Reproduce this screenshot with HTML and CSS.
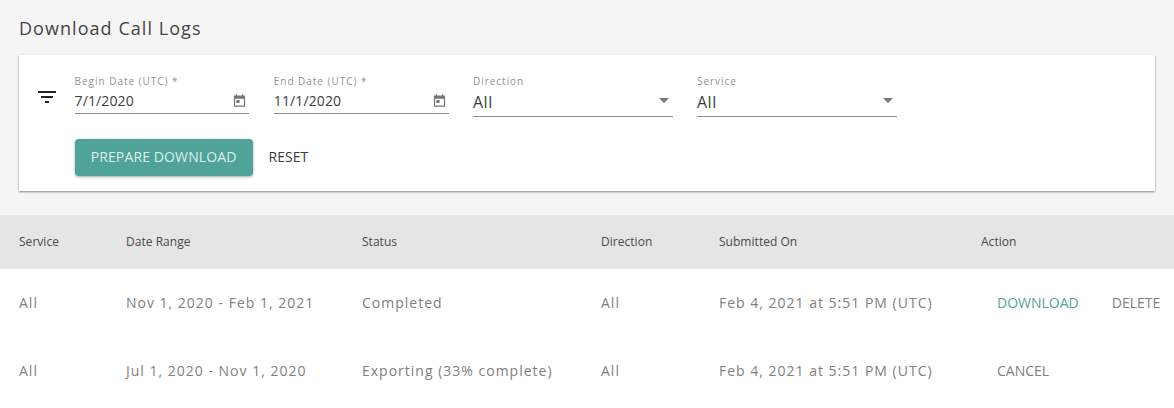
FILE: index.html
```html
<!DOCTYPE html>
<html lang="en">
<head>
<meta charset="utf-8">
<title>Download Call Logs</title>
<link rel="stylesheet" href="styles.css">
</head>
<body>
<main class="page">
  <h1 class="title">Download Call Logs</h1>
  <section class="card">
    <svg class="filter-icon" viewBox="0 0 24 24" width="24" height="24"><path d="M10 18h4v-2h-4v2zM3 6v2h18V6H3zm3 7h12v-2H6v2z"/></svg>
    <div class="form">
      <div class="fields">
        <div class="field date">
          <label class="label">Begin Date (UTC) *</label>
          <div class="control">
            <span class="value">7/1/2020</span>
            <svg class="cal" viewBox="0 0 24 24" width="15" height="15"><path d="M19 4h-1V2h-2v2H8V2H6v2H5c-1.1 0-2 .9-2 2v14c0 1.1.9 2 2 2h14c1.1 0 2-.9 2-2V6c0-1.100-.9-2-2-2zm0 16H5V9h14v11zM7 11h5v5H7z"/></svg>
          </div>
        </div>
        <div class="field date">
          <label class="label">End Date (UTC) *</label>
          <div class="control">
            <span class="value">11/1/2020</span>
            <svg class="cal" viewBox="0 0 24 24" width="15" height="15"><path d="M19 4h-1V2h-2v2H8V2H6v2H5c-1.1 0-2 .9-2 2v14c0 1.1.9 2 2 2h14c1.1 0 2-.9 2-2V6c0-1.100-.9-2-2-2zm0 16H5V9h14v11zM7 11h5v5H7z"/></svg>
          </div>
        </div>
        <div class="field select">
          <label class="label">Direction</label>
          <div class="control">
            <span class="value">All</span>
            <svg class="caret" viewBox="0 0 10 5" width="10" height="5"><path d="M0 0h10L5 5z"/></svg>
          </div>
        </div>
        <div class="field select">
          <label class="label">Service</label>
          <div class="control">
            <span class="value">All</span>
            <svg class="caret" viewBox="0 0 10 5" width="10" height="5"><path d="M0 0h10L5 5z"/></svg>
          </div>
        </div>
      </div>
      <div class="buttons">
        <button class="btn-primary">PREPARE DOWNLOAD</button>
        <button class="btn-text">RESET</button>
      </div>
    </div>
  </section>
  <section class="logs">
    <div class="row head">
      <div>Service</div><div>Date Range</div><div>Status</div><div>Direction</div><div>Submitted On</div><div>Action</div>
    </div>
    <div class="row item">
      <div>All</div><div>Nov 1, 2020 - Feb 1, 2021</div><div>Completed</div><div>All</div><div>Feb 4, 2021 at 5:51 PM (UTC)</div>
      <div class="actions"><a class="act green">DOWNLOAD</a><a class="act">DELETE</a></div>
    </div>
    <div class="row item">
      <div>All</div><div>Jul 1, 2020 - Nov 1, 2020</div><div>Exporting (33% complete)</div><div>All</div><div>Feb 4, 2021 at 5:51 PM (UTC)</div>
      <div class="actions"><a class="act">CANCEL</a></div>
    </div>
  </section>
</main>
</body>
</html>
```
FILE: styles.css
```css
* { box-sizing: border-box; }
html, body { margin: 0; height: 100%; }
body {
  background: #f5f5f5;
  font-family: "Open Sans", sans-serif;
  color: #333;
  overflow: hidden;
}
.page { display: flex; flex-direction: column; height: 408px; }
.title {
  margin: 0;
  padding: 16px 19px 0;
  height: 55px;
  font-size: 18px;
  line-height: 24px;
  font-weight: 400;
  letter-spacing: 1.05px;
  color: #444;
}
.card {
  margin: 0 19px;
  height: 136px;
  background: #fff;
  display: flex;
  box-shadow: 0 1px 2px rgba(0,0,0,.45);
  padding: 19px 0 0 16px;
}
.filter-icon { fill: #222; margin-top: 11px; flex: none; }
.form { margin-left: 15.6px; }
.fields { display: flex; height: 65px; }
.field { display: flex; flex-direction: column; }
.date { width: 174.8px; margin-right: 24.4px; }
.select { width: 200px; margin-right: 24px; }
.label {
  font-size: 10px;
  line-height: 14px;
  letter-spacing: .97px;
  color: #929292;
}
.control {
  display: flex;
  align-items: center;
  justify-content: space-between;
  border-bottom: 1px solid #8c8c8c;
  color: #3c3c3c;
}
.date .control { height: 26px; padding-bottom: 1px; font-size: 14px; letter-spacing: .12px; }
.select .control { height: 29px; padding-bottom: 1px; font-size: 16px; letter-spacing: .5px; }
.cal { fill: #757575; margin-right: 2px; }
.caret { fill: #757575; margin: 0 4px 2px 0; }
.buttons { display: flex; align-items: center; }
.btn-primary {
  width: 178px;
  height: 37px;
  background: #50a399;
  color: #dfeeec;
  border: 0;
  border-radius: 4px;
  font: 400 14px "Open Sans", sans-serif;
  letter-spacing: .12px;
  box-shadow: 0 1px 3px rgba(0,0,0,.35);
  padding: 0 0 2px;
}
.btn-text {
  margin-left: 16px;
  background: none;
  border: 0;
  padding: 0 0 2px;
  color: #3c3c3c;
  font: 400 14px "Open Sans", sans-serif;
}
.logs { margin-top: 24px; background: #fff; flex: 1; }
.row {
  display: grid;
  grid-template-columns: 107px 236px 239px 118px 262px 1fr;
  padding-left: 19px;
  align-items: center;
}
.head { background: #e5e5e5; height: 54px; padding-bottom: 2px; font-size: 12px; letter-spacing: .03px; color: #4a4a4a; }
.item { height: 68px; padding-bottom: 2px; font-size: 14px; letter-spacing: 1px; color: #808080; }
.actions { display: flex; padding-left: 16px; font-size: 14px; letter-spacing: 0; }
.act { margin-right: 33px; }
.green { color: #54a298; }
```
